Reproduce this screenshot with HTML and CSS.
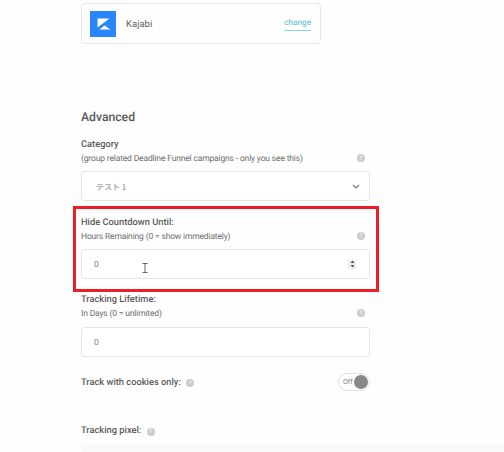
FILE: index.html
```html
<!DOCTYPE html>
<html lang="en">
<head>
  <meta charset="UTF-8" />
  <title>Advanced settings</title>
  <link rel="stylesheet" href="styles.css">
</head>
<body>
  <div class="page">
    <div class="integration">
      <svg class="logo" width="26" height="26" viewBox="0 0 26 26">
        <rect width="26" height="26" fill="#2b87f9"/>
        <path d="M7.5 7.5H19.5L7.5 16.5Z" fill="#fff"/>
        <path d="M9.5 18.5L14.5 14.5L20.5 18.5Z" fill="#fff"/>
      </svg>
      <span class="integration-name">Kajabi</span>
      <a class="change">change</a>
    </div>

    <h2>Advanced</h2>

    <div class="field category">
      <div class="label">Category</div>
      <div class="hint-row">
        <span class="hint">(group related Deadline Funnel campaigns - only you see this)</span>
        <span class="help">?</span>
      </div>
      <div class="input select">
        <span class="value jp">テスト 1</span>
        <svg width="8" height="5" viewBox="0 0 8 5"><path d="M1 1L4 4L7 1" fill="none" stroke="#777" stroke-width="1.1"/></svg>
      </div>
    </div>

    <div class="highlight">
      <div class="label">Hide Countdown Until:</div>
      <div class="hint-row">
        <span class="hint">Hours Remaining (0 = show immediately)</span>
        <span class="help">?</span>
      </div>
      <div class="input number">
        <span class="value">0</span>
        <svg class="ibeam" width="6" height="10" viewBox="0 0 6 10"><path d="M0.5 0.5H5.5M3 0.5V9.5M0.5 9.5H5.5" fill="none" stroke="#666" stroke-width="1"/></svg>
        <span class="spinner">
          <svg width="5" height="8" viewBox="0 0 5 8"><path d="M2.5 0.5L4.5 3H0.5ZM2.5 7.5L0.5 5H4.5Z" fill="#555"/></svg>
        </span>
      </div>
    </div>

    <div class="field lifetime">
      <div class="label">Tracking Lifetime:</div>
      <div class="hint-row">
        <span class="hint">In Days (0 = unlimited)</span>
        <span class="help">?</span>
      </div>
      <div class="input">
        <span class="value">0</span>
      </div>
    </div>

    <div class="toggle-row">
      <div class="label">Track with cookies only: <span class="help">?</span></div>
      <div class="toggle">
        <span class="toggle-text">Off</span>
        <span class="knob"></span>
      </div>
    </div>

    <div class="label pixel-label">Tracking pixel: <span class="help">?</span></div>
    <div class="code-box"></div>
  </div>
</body>
</html>
```

FILE: styles.css
```css
body {
  margin: 0;
  background: #fefefe;
  font-family: 'Roboto', sans-serif;
  color: #555;
  height: 452px;
  overflow: hidden;
  text-rendering: geometricPrecision;
}

.page {
  padding: 3px 0 0 81px;
  width: 289px;
}

/* Connected integration card */
.integration {
  width: 240px;
  height: 41px;
  box-sizing: border-box;
  border: 1px solid #e8e8e8;
  border-radius: 4px;
  display: flex;
  align-items: center;
  padding: 0 9px 0 8px;
}

.logo {
  flex: none;
}

.integration-name {
  margin-left: 10px;
  padding-top: 2px;
  font-size: 9.5px;
  color: #666;
  flex: 1;
}

.change {
  font-size: 8.2px;
  color: #55b9d0;
  padding-bottom: 2px;
  border-bottom: 1px solid #8ad4e5;
  position: relative;
  top: 1px;
}

h2 {
  margin: 65px 0 0;
  font-size: 12.2px;
  line-height: 16px;
  font-weight: 500;
  color: #5a5a5a;
}

.category {
  margin-top: 13px;
}

.label {
  font-size: 9.3px;
  line-height: 13px;
  font-weight: 500;
  color: #5c5c5c;
}

.hint-row {
  display: flex;
  justify-content: space-between;
  align-items: center;
  height: 14px;
}

.highlight .hint-row {
  height: 13px;
}

.hint {
  padding-top: 2px;
  font-size: 8.5px;
  letter-spacing: -0.16px;
  color: #6e6e6e;
}

.help {
  display: inline-flex;
  width: 8px;
  height: 8px;
  margin-right: 5px;
  border-radius: 50%;
  background: #ccc;
  color: #eee;
  font-size: 6px;
  font-weight: 700;
  align-items: center;
  justify-content: center;
}

.label .help {
  margin: 0 0 0 3px;
}

.input {
  height: 30px;
  box-sizing: border-box;
  margin-top: 6px;
  border: 1px solid #e6e6e6;
  border-radius: 3px;
  background: #fff;
  display: flex;
  align-items: center;
  justify-content: space-between;
  padding: 0 9px 0 12px;
  position: relative;
}

.select {
  padding-left: 14px;
}

.value {
  padding-top: 2px;
  font-size: 8.5px;
  color: #808080;
}

.jp {
  font-family: 'Noto Sans CJK JP', 'Roboto', sans-serif;
  font-size: 8px;
}

/* Red annotation box around the highlighted field */
.highlight {
  margin: 5px -9px 0 -8px;
  padding: 7px 6px 10px 5px;
  border: 3px solid #ee1c25;
}

.number,
.lifetime .input {
  margin-top: 7px;
}

.number {
  padding-right: 13px;
}

.ibeam {
  position: absolute;
  left: 60px;
  top: 13px;
}

.spinner {
  width: 8px;
  height: 9px;
  background: #eee;
  display: flex;
  align-items: center;
  justify-content: center;
}

.lifetime {
  margin-top: 1px;
}

.toggle-row {
  margin-top: 16px;
  display: flex;
  justify-content: space-between;
  align-items: center;
  height: 18px;
}

.toggle {
  width: 32px;
  height: 18px;
  box-sizing: border-box;
  border: 1px solid #e2e2e2;
  border-radius: 9px;
  display: flex;
  align-items: center;
  justify-content: space-between;
  padding: 0 1px 0 4px;
}

.toggle-text {
  font-size: 7px;
  color: #808080;
}

.knob {
  width: 14px;
  height: 14px;
  border-radius: 50%;
  background: #888;
}

.pixel-label {
  margin-top: 33px;
}

.code-box {
  margin-top: 7px;
  width: 423px;
  height: 20px;
  background: #f8f9f9;
}
```
